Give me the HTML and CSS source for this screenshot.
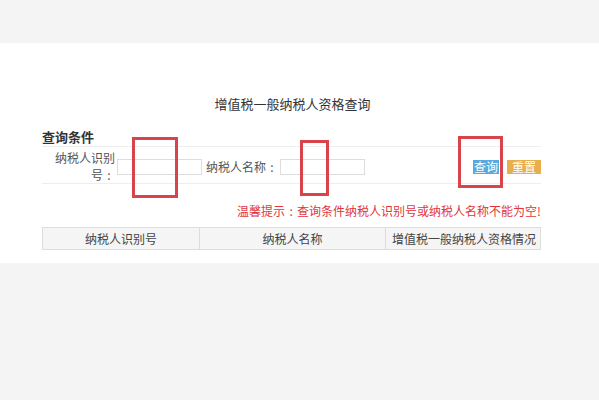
FILE: index.html
```html
<!DOCTYPE html>
<html lang="zh-CN">
<head>
<meta charset="utf-8">
<title>增值税一般纳税人资格查询</title>
<link rel="stylesheet" href="styles.css">
</head>
<body>
<div class="page">
  <div class="wrap">
    <h1 class="title">增值税一般纳税人资格查询</h1>
    <div class="section">查询条件</div>
    <div class="form-row">
      <label class="label label-id">纳税人识别<span class="nw">号<span class="colon">:</span></span></label>
      <span class="input"></span>
      <label class="label label-name">纳税人名称<span class="colon">:</span></label>
      <span class="input"></span>
      <span class="spacer"></span>
      <span class="btn btn-query">查询</span>
      <span class="btn btn-reset">重置</span>
    </div>
    <div class="tip">温馨提示<span class="colon">:</span>查询条件纳税人识别号或纳税人名称不能为空!</div>
    <div class="table">
      <div class="th c1">纳税人识别号</div>
      <div class="th c2">纳税人名称</div>
      <div class="th c3">增值税一般纳税人资格情况</div>
    </div>
    <span class="mark mark1"></span>
    <span class="mark mark2"></span>
    <span class="mark mark3"></span>
  </div>
</div>
</body>
</html>
```

FILE: styles.css
```css
html, body {
  margin: 0;
  padding: 0;
}
body {
  background: #f4f4f4;
  font-family: "Noto Sans CJK SC", "Noto Sans", sans-serif;
  color: #333;
  font-size: 12px;
}
.page {
  margin-top: 43px;
  height: 220px;
  background: #fff;
}
.wrap {
  position: relative;
  width: 499px;
  margin-left: 42px;
  padding-top: 52px;
}
.title {
  margin: 0;
  font-size: 13px;
  font-weight: normal;
  line-height: 18px;
  text-align: center;
  color: #333;
  padding-left: 2px;
}
.section {
  margin-top: 15px;
  font-size: 13px;
  font-weight: bold;
  line-height: 18px;
  color: #333;
}
.form-row {
  display: flex;
  align-items: center;
  height: 36px;
  border-top: 1px solid #eeeeee;
  border-bottom: 1px solid #eeeeee;
}
.label {
  color: #555;
  line-height: 17px;
  text-align: right;
}
.nw {
  white-space: nowrap;
}
.colon {
  display: inline-block;
  width: 12px;
  text-align: center;
  line-height: 12px;
}
.label-id {
  width: 73px;
  padding-top: 1px;
}
.label-name {
  margin-left: 3px;
  width: 73px;
  padding-top: 3px;
  white-space: nowrap;
}
.input {
  display: block;
  width: 83px;
  height: 14px;
  border: 1px solid #dddddd;
  margin-left: 2px;
  margin-top: 3px;
  background: #fff;
}
.spacer {
  flex: 1;
}
.btn {
  display: block;
  height: 14px;
  line-height: 14px;
  font-size: 12px;
  color: #fff;
  text-align: center;
  margin-top: 3px;
}
.btn-query {
  width: 26px;
  background: #5aa8dc;
}
.btn-reset {
  width: 34px;
  margin-left: 8px;
  background: #e8ae4e;
}
.tip {
  margin-top: 19px;
  text-align: right;
  color: #e0363c;
  line-height: 16px;
}
.table {
  display: grid;
  grid-template-columns: 156px 186px 157px;
  margin-top: 8px;
  border: 1px solid #dddddd;
  background: #f5f5f5;
}
.th {
  height: 21px;
  line-height: 21px;
  text-align: center;
  color: #444;
}
.c2, .c3 {
  border-left: 1px solid #dddddd;
}
.mark {
  position: absolute;
  border: 3px solid #d9434a;
  box-sizing: border-box;
}
.mark1 {
  left: 90px;
  top: 94px;
  width: 46px;
  height: 61px;
}
.mark2 {
  left: 258px;
  top: 97px;
  width: 29px;
  height: 56px;
}
.mark3 {
  left: 416px;
  top: 93px;
  width: 45px;
  height: 52px;
}
```
